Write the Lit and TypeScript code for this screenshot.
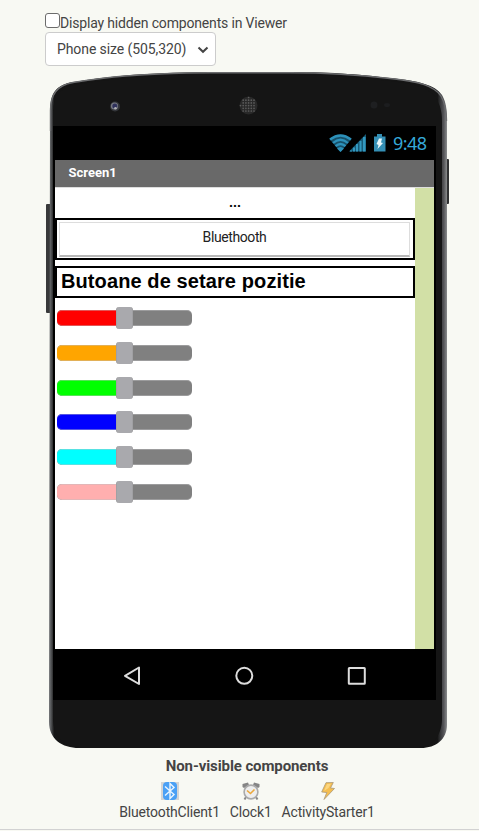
import { LitElement, html, css, svg } from "lit";
import { customElement, property } from "lit/decorators.js";

@customElement("color-slider")
class ColorSlider extends LitElement {
  @property() color = "red";
  static styles = css`
    :host { display: flex; align-items: center; position: relative; width: 135px; height: 22px; }
    .track { display: flex; width: 135px; height: 16px; border-radius: 5px; overflow: hidden; background: #808080; box-sizing: border-box; }
    .fill { width: 66px; }
    .edge { position: absolute; inset: 3px 0; border-radius: 5px; border: 1px solid rgba(190, 190, 193, 0.45); border-width: 1px 0; }
    .thumb { position: absolute; left: 59px; top: 0; width: 17px; height: 22px; border-radius: 3px; background: #a9a9ad; border: 1px solid #a0a0a3; border-width: 0 1px; box-sizing: border-box; }
  `;
  render() {
    return html`<div class="track"><div class="fill" style="background:${this.color}"></div></div>
      <div class="edge"></div><div class="thumb"></div>`;
  }
}

@customElement("phone-frame")
class PhoneFrame extends LitElement {
  static styles = css`
    :host { display: block; }
    svg { display: block; }
  `;
  render() {
    const dots = [];
    for (let y = -8; y <= 8; y += 2.7) {
      for (let x = -8; x <= 8; x += 2.7) {
        if (x * x + y * y < 68) dots.push(svg`<circle cx=${203.5 + x} cy=${34.5 + y} r="0.85" fill="#5c5c5c"/>`);
      }
    }
    return html`<svg width="406" height="680" viewBox="0 0 406 680">
      <defs>
        <linearGradient id="side" x1="4" x2="402" y1="0" y2="0" gradientUnits="userSpaceOnUse">
          <stop offset="0" stop-color="#77797b"/><stop offset=".005" stop-color="#555759"/><stop offset=".009" stop-color="#343536"/>
          <stop offset=".013" stop-color="#151515"/><stop offset=".976" stop-color="#151515"/>
          <stop offset=".984" stop-color="#38393b"/><stop offset=".992" stop-color="#555558"/><stop offset="1" stop-color="#8a8c8d"/>
        </linearGradient>
      </defs>
      <rect x="1" y="133" width="5" height="109" rx="1" fill="#38393a"/>
      <rect x="400" y="88" width="4" height="45" rx="1" fill="#303132"/>
      <path d="M5 40C5 22 11 14 28 11C58 6.500 92 1.500 165 1H245C290 1 320 4 345 7C375 10 390 14 397 24C401 31 402 38 402 48V654C402 668 391 677 376 677H34C17 677 4 668 4 651Z" fill="url(#side)"/>
      <path d="M5.500 60V40C5.500 23 12 14.500 28 11.500C58 7 92 2 165 1.700H245C290 1.700 320 4.500 345 7.500C375 10.500 389 15 396 25C400 32 401.500 38 401.500 50" fill="none" stroke="#6b6c6e" stroke-width="1.4"/>
      <path d="M8 60V40C8.500 26 14 17.500 29 14C60 9 94 4.300 165 4H245C290 4 320 7 345 10C372 13 385 18 391 27C395 34 397 40 397 51V648C397 662 389 676 374 676H34C19 676 8 665 8 648Z" fill="#151515"/>
      <path d="M21 55.500H383" stroke="#555" stroke-width="1"/>
      <circle cx="70" cy="35.500" r="5" fill="#33353a"/><circle cx="69.500" cy="35" r="3.600" fill="#777a83"/>
      <circle cx="69.800" cy="35" r="2.500" fill="#30325c"/><circle cx="70.500" cy="37.200" r="1.300" fill="#b0b1b5"/>
      <circle cx="203.500" cy="34.500" r="9" fill="#292929"/>${dots}
      <circle cx="329" cy="34" r="3.500" fill="#1e1f21"/><ellipse cx="342" cy="34" rx="3" ry="2" fill="#1c1d1f"/>
    </svg>`;
  }
}

@customElement("app-root")
class AppRoot extends LitElement {
  static styles = css`
    :host { display: block; position: relative; width: 479px; height: 831px; overflow: hidden; background: #f8f9f3; color: #444; font: 14px/16px Roboto, sans-serif; box-sizing: border-box; }
    .page { display: flex; flex-direction: column; height: 100%; }
    .options { height: 71px; padding: 13px 0 0 45px; box-sizing: border-box; }
    .option { display: flex; height: 19px; white-space: nowrap; }
    .check { width: 15px; height: 15px; border: 1px solid #6c6c6c; border-radius: 3px; background: white; box-sizing: border-box; flex: none; }
    .option span { padding-top: 2px; letter-spacing: -0.17px; }
    .select { display: flex; align-items: center; justify-content: space-between; width: 171px; height: 34px; border: 1px solid #ccc; border-radius: 4px; background: white; padding: 0 6px 1px 11px; box-sizing: border-box; letter-spacing: -0.09px; }
    .phone { position: relative; width: 406px; height: 680px; margin-left: 45px; padding: 55px 15px 51px 8px; box-sizing: border-box; flex: none; }
    phone-frame { position: absolute; inset: 0; }
    .display { position: relative; width: 383px; height: 574px; background: black; display: flex; flex-direction: column; padding: 0 2px; box-sizing: border-box; }
    .status { height: 34px; display: flex; flex: none; }
    .status svg { display: block; }
    .title { height: 27px; background: #696969; color: white; font-weight: 700; font-size: 13px; line-height: 26px; padding-left: 13.5px; box-sizing: border-box; flex: none; }
    .workspace { height: 462px; background: #d2e0a6; border-top: 1px solid #ddd; box-sizing: border-box; flex: none; }
    .canvas { width: 360px; height: 461px; background: white; color: black; display: flex; flex-direction: column; }
    .dots { height: 30px; line-height: 29px; text-align: center; font-weight: 700; flex: none; }
    .box { border: 2px solid black; box-sizing: border-box; flex: none; }
    .box.button { height: 42px; padding: 2px 3px 2px 2px; }
    .button-face { height: 35px; border: 1px solid #ddd; border-bottom: 2px solid #b8b8b8; box-sizing: border-box; display: flex; justify-content: center; line-height: 29px; color: #222; letter-spacing: -0.4px; }
    .heading { height: 32px; margin-top: 6px; padding-left: 4px; font: 700 20px/27px "Liberation Sans", sans-serif; letter-spacing: 0.1px; white-space: nowrap; }
    .sliders { display: flex; flex-direction: column; gap: 12.8px; padding: 9px 2px; }
    .nav { height: 51px; flex: none; }
    .nonvisible { text-align: center; margin-top: 7px; }
    .nonvisible strong { display: block; font-size: 15px; line-height: 17px; padding-left: 15px; letter-spacing: -0.1px; }
    .components { display: flex; justify-content: center; gap: 10px; margin-top: 7px; padding-left: 15px; letter-spacing: -0.18px; }
    .component { display: flex; flex-direction: column; align-items: center; line-height: 16px; }
    .component svg { display: block; width: 18px; height: 18px; margin-bottom: 4px; }
    .rule { position: absolute; left: 0; right: 0; bottom: 1px; height: 1px; background: #d2d2d2; }
  `;
  render() {
    return html`<div class="page">
      <div class="options">
        <div class="option"><div class="check"></div><span>Display hidden components in Viewer</span></div>
        <div class="select"><span>Phone size (505,320)</span>
          <svg width="12" height="12" viewBox="0 0 12 12"><path d="M1.500 4.500L6 8.800L10.500 4.500" fill="none" stroke="#444" stroke-width="2"/></svg></div>
      </div>
      <div class="phone"><phone-frame></phone-frame>
        <div class="display">
          <div class="status">
            <svg width="379" height="34" viewBox="55 126 379 34">
              <path d="M329.500 139Q340.500 130.500 351.500 139L340.500 152Z" fill="#175069"/>
              <g fill="none" stroke="#2d91ba" stroke-width="2.300">
                <path d="M330 139.500Q340.500 131.500 351 139.500M333 143Q340.500 136.500 348 143M335.500 146.200Q340.500 141.700 345.500 146.200"/>
              </g>
              <path d="M337 148.500Q340.500 145.500 344 148.500L340.500 152Z" fill="#2d91ba"/>
              <path d="M349 151.500L366 134V151.500Z" fill="#175b78"/>
              <path d="M350 150.500h2v1h-2zM353 147.500h2v4h-2zM356 144h2v7.500h-2zM359.500 141h2v10.500h-2zM363 137h2.500v14.500H363z" fill="#3398bf"/>
              <path d="M374 136.500H377V134H382V136.500H385.500V151.500H374Z" fill="#348fb5"/>
              <path d="M379 138.500H382L381 142.500L383 143L377.500 149L378.500 145L376.500 144Z" fill="#e9f7fb"/>
              <text x="393" y="149.500" fill="#35a8d8" font-family="Noto Sans, sans-serif" font-size="18" textLength="34">9:48</text>
            </svg>
          </div>
          <div class="title">Screen1</div>
          <div class="workspace"><div class="canvas">
            <div class="dots">...</div>
            <div class="box button"><div class="button-face">Bluethooth</div></div>
            <div class="box heading">Butoane de setare pozitie</div>
            <div class="sliders">${["#f00", "#ffa500", "#0f0", "#00f", "#0ff", "#ffafaf"].map((c) => html`<color-slider .color=${c}></color-slider>`)}</div>
          </div></div>
          <svg class="nav" width="379" height="51" viewBox="55 649 379 51" fill="none" stroke="#ddd" stroke-width="2">
            <path d="M139 667.500V684L125 675.800Z" stroke-linejoin="round"/><circle cx="244.300" cy="675.800" r="8"/><rect x="348.800" y="668" width="16" height="15.700" rx=".5"/>
          </svg>
        </div>
      </div>
      <div class="nonvisible"><strong>Non-visible components</strong>
        <div class="components">
          <div class="component"><svg viewBox="0 0 18 18"><rect width="18" height="18" fill="#d4d4d4"/><rect x="2" y="0" width="14" height="18" rx="4" fill="#4aa0f5"/><path d="M4 4.500L13 12.500L9 16.500V1.500L13 5.500L4 13.500" fill="none" stroke="#eaf5ff" stroke-width="1.4"/></svg><span>BluetoothClient1</span></div>
          <div class="component"><svg viewBox="0 0 18 18"><path d="M.5 5V2L6 .5L7 3L2 6ZM17.500 5V2L12 .5L11 3L16 6Z" fill="#858585"/><path d="M4 15L2.500 17.500M14 15L15.500 17.500" stroke="#888" stroke-width="2"/><circle cx="9" cy="10" r="6.900" fill="#eee" stroke="#aaa" stroke-width="1.6"/><path d="M5 8.500L8.500 11.500L12.500 7.500" fill="none" stroke="#eba83c" stroke-width="1.6"/></svg><span>Clock1</span></div>
          <div class="component"><svg viewBox="0 0 18 18"><path d="M7 .7L14.300 .5L11.500 6L15.500 6.500L5 17.500L7.800 10.500L2.700 10Z" fill="#f5be50" stroke="#a99878" stroke-width=".8"/><path d="M8 2L12 1.700L9.500 6L5 9" fill="#fbd680"/></svg><span>ActivityStarter1</span></div>
        </div>
      </div>
      <div class="rule"></div>
    </div>`;
  }
}
